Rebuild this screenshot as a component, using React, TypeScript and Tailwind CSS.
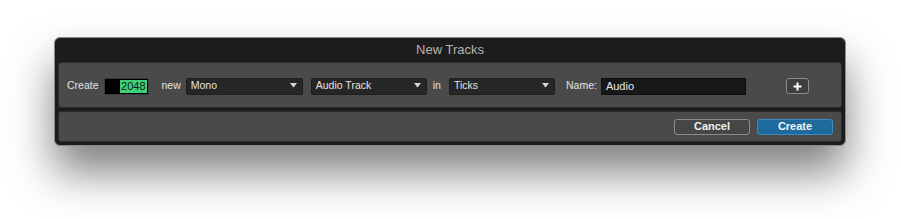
function Arrow() {
  return (
    <svg width="7" height="5" viewBox="0 0 7 5" className="absolute right-[5px] top-[4px]">
      <path d="M0 0 H7 L3.5 4.5 Z" fill="#d8d8d8" />
    </svg>
  );
}

type DropdownProps = {
  label: string;
  width: string;
};

function Dropdown({ label, width }: DropdownProps): React.JSX.Element {
  return (
    <div
      className={`relative h-[17px] ${width} rounded-[2px] bg-[#262626] border border-[#1e1e1e] flex items-center pl-[4px] text-[#e4e4e4]`}
    >
      {label}
      <Arrow />
    </div>
  );
}

export default function App(): React.JSX.Element {
  return (
    <div
      className="w-[901px] h-[219px] bg-white pt-[37px] pl-[54px] overflow-hidden"
      style={{ fontFamily: '"Liberation Sans", Arial, sans-serif' }}
    >
      <div className="w-[792px] h-[109px] rounded-[6px] bg-[#1c1c1c] border border-[#8a8a8a] shadow-[0_26px_44px_rgba(0,0,0,0.5)] flex flex-col">
        {/* Title bar */}
        <div className="h-[24px] flex items-center justify-center text-[13px] text-[#b4b4b4]">
          New Tracks
        </div>

        <div className="flex-1 flex flex-col gap-[3px] px-[3px] pb-[3px]">
          {/* Track settings row */}
          <div className="h-[46px] rounded-[3px] bg-[#4a4a4a] border border-[#2c2c2c] flex items-center pt-[2px] pl-[8px] text-[10.5px] text-[#e2e2e2]">
            <span>Create</span>
            <div className="ml-[5px] w-[45px] h-[17px] bg-black border border-[#3a3a3a] flex items-center justify-end pr-[1px]">
              <span className="bg-[#3fcf78] text-[#0b2414] px-[1px] leading-[13px] text-[11px]">2048</span>
            </div>
            <span className="ml-[13px]">new</span>
            <div className="ml-[5px]">
              <Dropdown label="Mono" width="w-[117px]" />
            </div>
            <div className="ml-[8px]">
              <Dropdown label="Audio Track" width="w-[116px]" />
            </div>
            <span className="ml-[6px]">in</span>
            <div className="ml-[8px]">
              <Dropdown label="Ticks" width="w-[106px]" />
            </div>
            <span className="ml-[11px]">Name:</span>
            <div className="ml-[4px] w-[145px] h-[17px] bg-[#181818] border border-[#0e0e0e] flex items-center pl-[4px] text-[11px] text-[#e8e8e8]">
              Audio
            </div>
            <button className="ml-[40px] w-[23px] h-[16px] rounded-[3px] border border-[#8c8c8c] bg-[#3e3e3e] flex items-center justify-center">
              <svg width="9" height="9" viewBox="0 0 9 9">
                <path d="M4.5 0.5 V8.5 M0.5 4.5 H8.5" stroke="#ffffff" strokeWidth="2" />
              </svg>
            </button>
          </div>

          {/* Buttons row */}
          <div className="flex-1 rounded-[3px] bg-[#4a4a4a] border border-[#2c2c2c] flex items-center justify-end pr-[8px] gap-[7px]">
            <button className="w-[76px] h-[16px] rounded-[3px] border border-[#8a8a8a] bg-[#464646] text-[11px] font-bold text-[#f0f0f0] leading-none">
              Cancel
            </button>
            <button className="w-[76px] h-[16px] rounded-[3px] border border-[#3a8cc2] bg-[#1f6a9c] text-[11px] font-bold text-[#f4f4f4] leading-none">
              Create
            </button>
          </div>
        </div>
      </div>
    </div>
  );
}
